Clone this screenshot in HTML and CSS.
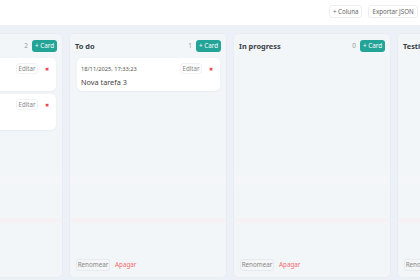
FILE: index.html
```html
<!DOCTYPE html>
<html lang="pt">
<head>
<meta charset="utf-8">
<link rel="stylesheet" href="styles.css">
</head>
<body>
<header class="topbar">
  <button class="tbtn">+ Coluna</button>
  <button class="tbtn">Exportar JSON</button>
  <button class="tbtn">Importar</button>
</header>
<main class="board">
  <div class="row">
    <section class="col">
      <div class="col-head">
        <span class="col-title">Backlog</span>
        <span class="count">2</span>
        <button class="add">+ Card</button>
      </div>
      <div class="cards">
        <div class="card">
          <div class="card-top"><span class="date">18/11/2025, 17:30:02</span><button class="edit">Editar</button><span class="x">✖</span></div>
          <div class="card-title">Nova tarefa 1</div>
        </div>
        <div class="card tall">
          <div class="card-top"><span class="date">18/11/2025, 17:31:10</span><button class="edit">Editar</button><span class="x">✖</span></div>
          <div class="card-title">Nova tarefa 2</div>
        </div>
      </div>
      <div class="col-foot"><button class="ren">Renomear</button><span class="del">Apagar</span></div>
    </section>
    <section class="col">
      <div class="col-head">
        <span class="col-title">To do</span>
        <span class="count">1</span>
        <button class="add">+ Card</button>
      </div>
      <div class="cards">
        <div class="card">
          <div class="card-top"><span class="date">18/11/2025, 17:33:23</span><button class="edit">Editar</button><span class="x">✖</span></div>
          <div class="card-title">Nova tarefa 3</div>
        </div>
      </div>
      <div class="col-foot"><button class="ren">Renomear</button><span class="del">Apagar</span></div>
    </section>
    <section class="col">
      <div class="col-head">
        <span class="col-title">In progress</span>
        <span class="count">0</span>
        <button class="add">+ Card</button>
      </div>
      <div class="cards"></div>
      <div class="col-foot"><button class="ren">Renomear</button><span class="del">Apagar</span></div>
    </section>
    <section class="col">
      <div class="col-head">
        <span class="col-title">Testing</span>
        <span class="count">0</span>
        <button class="add">+ Card</button>
      </div>
      <div class="cards"></div>
      <div class="col-foot"><button class="ren">Renomear</button><span class="del">Apagar</span></div>
    </section>
  </div>
</main>
</body>
</html>
```
FILE: styles.css
```css
* { box-sizing: border-box; }
html, body { margin: 0; height: 100%; }
body {
  font-family: "Noto Sans", "Open Sans", sans-serif;
  background: #ebf1f6;
  width: 420px;
  height: 280px;
  overflow: hidden;
  color: #333;
}
.topbar {
  height: 26px;
  background: #fff;
  border-bottom: 1px solid #eef1f4;
  display: flex;
  justify-content: flex-end;
  align-items: flex-start;
  gap: 6px;
  padding: 5px 0 0 0;
  overflow: hidden;
  white-space: nowrap;
}
.tbtn {
  font: inherit;
  font-size: 6.2px;
  color: #666;
  background: #fff;
  border: 1px solid #eceff2;
  border-radius: 3px;
  height: 13px;
  padding: 0 3px;
  line-height: 11px;
  flex: none;
}
.topbar .tbtn:last-child { margin-right: -38px; }
.board {
  height: 254px;
  padding-top: 7px;
  overflow: hidden;
}
.row {
  display: flex;
  gap: 6px;
  margin-left: -95px;
  height: 100%;
}
.col {
  flex: none;
  width: 158px;
  height: 245px;
  border: 1px solid #e7edf2;
  border-radius: 5px;
  background:
    linear-gradient(to bottom,
      transparent 141px, #f5f6f9 141px, #f5f6f9 151px, transparent 151px,
      transparent 184px, #f6f1f4 184px, #f6f1f4 189px, transparent 189px),
    #f2f6f9;
  display: flex;
  flex-direction: column;
  padding: 0 5px 0 5px;
}
.col-head {
  display: flex;
  align-items: center;
  height: 23px;
  padding-top: 0;
}
.col-title {
  font-size: 7.4px;
  font-weight: 700;
  color: #3a3f47;
  flex: 1;
  white-space: nowrap;
}
.count {
  font-size: 6.5px;
  color: #9a9a9a;
  margin-right: 4px;
}
.add {
  font: inherit;
  font-size: 6.3px;
  color: #fff;
  background: #22a497;
  border: none;
  border-radius: 3px;
  height: 12px;
  width: 25px;
  padding: 0;
  line-height: 12px;
}
.cards {
  flex: 1;
  display: flex;
  flex-direction: column;
  gap: 3px;
  padding: 1px 1px 0 2px;
}
.card {
  background: #fff;
  border-radius: 5px;
  height: 33px;
  padding: 5px 5px 0 4px;
  box-shadow: 0 1px 2px rgba(120,140,160,0.10);
}
.card.tall { height: 36px; }
.card-top {
  display: flex;
  align-items: center;
  height: 11px;
}
.date {
  font-size: 5.7px;
  color: #555;
  flex: 1;
  white-space: nowrap;
}
.edit {
  font: inherit;
  font-size: 6.2px;
  color: #888;
  background: #fff;
  border: 1px solid #f0f2f4;
  border-radius: 3px;
  height: 11px;
  width: 22px;
  padding: 0;
  line-height: 9px;
}
.x {
  font-size: 5px;
  color: #ee3b4a;
  margin-left: 7px;
  width: 6px;
}
.card-title {
  font-size: 7.3px;
  color: #444;
  margin-top: 3px;
}
.col-foot {
  display: flex;
  align-items: center;
  gap: 5px;
  height: 13px;
  margin-bottom: 6px;
  padding-left: 1px;
}
.ren {
  font: inherit;
  font-size: 6.3px;
  color: #888;
  background: #f4f6f8;
  border: 1px solid #e6eaee;
  border-radius: 3px;
  height: 12px;
  width: 34px;
  padding: 0;
  line-height: 10px;
}
.del {
  font-size: 6.3px;
  color: #f26a6a;
}
```
